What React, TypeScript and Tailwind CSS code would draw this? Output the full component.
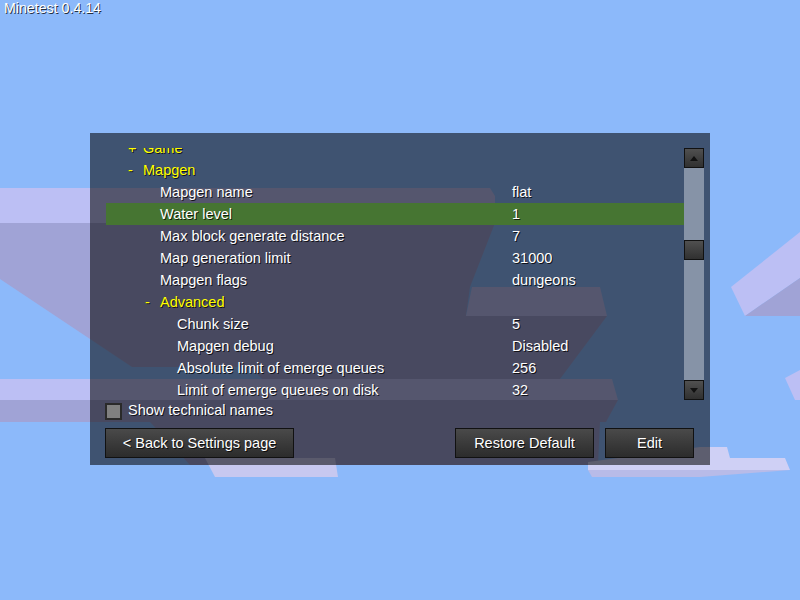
import clsx from "clsx";

type Row = {
  label: string;
  value?: string;
  depth: number;
  group?: boolean;
  open?: boolean;
  selected?: boolean;
};

const rows: Row[] = [
  { label: "Game", depth: 1, group: true },
  { label: "Mapgen", depth: 1, group: true, open: true },
  { label: "Mapgen name", value: "flat", depth: 2 },
  { label: "Water level", value: "1", depth: 2, selected: true },
  { label: "Max block generate distance", value: "7", depth: 2 },
  { label: "Map generation limit", value: "31000", depth: 2 },
  { label: "Mapgen flags", value: "dungeons", depth: 2 },
  { label: "Advanced", depth: 2, group: true, open: true },
  { label: "Chunk size", value: "5", depth: 3 },
  { label: "Mapgen debug", value: "Disabled", depth: 3 },
  { label: "Absolute limit of emerge queues", value: "256", depth: 3 },
  { label: "Limit of emerge queues on disk", value: "32", depth: 3 },
];

const groupPad: Record<number, string> = { 1: "pl-[22px]", 2: "pl-[39px]" };
const itemPad: Record<number, string> = { 2: "pl-[54px]", 3: "pl-[71px]" };

const shadow = "[text-shadow:1px_1px_0_rgba(0,0,0,0.75)]";

const Clouds = () => (
  <svg className="absolute inset-0" width="800" height="600" viewBox="0 0 800 600">
    {/* big cloud on the left */}
    <polygon points="0,223 495,223 470,287 466,316 607,316 560,379 262,379 250,367 132,367 0,279" fill="#a0a3d6" />
    <polygon points="0,188 490,188 495,196 495,223 0,223" fill="#bcbff4" />
    <polygon points="472,287 600,287 607,316 466,316" fill="#bcbff4" />
    <polygon points="0,379 612,379 618,400 0,400" fill="#bcbff4" />
    <polygon points="0,400 618,400 606,422 0,422" fill="#a0a3d6" />
    <polygon points="150,422 600,422 598,465 190,465" fill="#a0a3d6" />
    {/* bottom pieces */}
    <polygon points="205,458 335,458 338,477 215,477" fill="#c7c8f0" />
    <polygon points="588,462 700,447 727,447 730,458 785,458 790,470 588,470" fill="#cfd0f5" />
    <polygon points="588,470 790,470 700,477 592,477" fill="#b8bbe8" />
    {/* right side */}
    <polygon points="731,287 800,232 800,278 745,316" fill="#bcbff4" />
    <polygon points="745,316 800,278 800,316" fill="#a0a3d6" />
    <polygon points="785,378 800,370 800,400 795,400" fill="#bcbff4" />
  </svg>
);

const ScrollButton = ({ up }: { up?: boolean }) => (
  <div className="flex h-[20px] w-[20px] items-center justify-center border border-[#111] bg-gradient-to-b from-[#505050] to-[#303030]">
    <svg width="8" height="5" viewBox="0 0 8 5">
      <polygon points={up ? "0,5 8,5 4,0" : "0,0 8,0 4,5"} fill="#111" />
    </svg>
  </div>
);

const Button = ({ label, className }: { label: string; className: string }) => (
  <button
    className={clsx(
      "flex h-[30px] items-center justify-center border border-[#111] bg-gradient-to-b from-[#4a4a4a] to-[#2c2c2c] pt-[2px] text-white",
      shadow,
      className
    )}
  >
    {label}
  </button>
);

export default function App() {
  return (
    <div className="relative h-[600px] w-[800px] overflow-hidden bg-[#8cb9fa] font-['Liberation_Sans',Arial,sans-serif] text-[14.5px]">
      <Clouds />
      <div className="relative">
        <div className={clsx("h-[16px] pl-[4px] text-[14.2px] leading-[16px] text-white", shadow)}>
          Minetest 0.4.14
        </div>

        <div className="ml-[90px] mt-[117px] flex h-[332px] w-[620px] flex-col bg-black/55 pl-[16px] pr-[6px] pt-[15px]">
          <div className="flex items-start">
            <div className="h-[253px] w-[578px] overflow-hidden">
              <div className="-mt-[11px]">
                {rows.map((r) => (
                  <div
                    key={r.label}
                    className={clsx("flex h-[22px] leading-[22px]", shadow, r.selected && "bg-[#467532]")}
                  >
                    {r.group ? (
                      <div className={clsx("flex w-[406px] text-[#ffff00]", groupPad[r.depth])}>
                        <span className="w-[15px]">{r.open ? "-" : "+"}</span>
                        <span>{r.label}</span>
                      </div>
                    ) : (
                      <div className={clsx("w-[406px] text-white", itemPad[r.depth])}>{r.label}</div>
                    )}
                    <div className="text-white">{r.value}</div>
                  </div>
                ))}
              </div>
            </div>
            <div className="flex h-[252px] w-[20px] flex-col bg-[#8693a7]">
              <ScrollButton up />
              <div className="h-[72px]" />
              <div className="h-[20px] w-[20px] border border-[#111] bg-gradient-to-b from-[#505050] to-[#303030]" />
              <div className="flex-1" />
              <ScrollButton />
            </div>
          </div>

          <div className="-ml-px flex h-[20px] items-center gap-[6px] text-white">
            <div className="h-[17px] w-[17px] border-2 border-[#2a2a2a] bg-[#808080]" />
            <span className={shadow}>Show technical names</span>
          </div>

          <div className="-ml-px mt-[7px] flex">
            <Button label="< Back to Settings page" className="w-[189px]" />
            <Button label="Restore Default" className="ml-auto w-[139px]" />
            <Button label="Edit" className="ml-[11px] mr-[10px] w-[89px]" />
          </div>
        </div>
      </div>
    </div>
  );
}
